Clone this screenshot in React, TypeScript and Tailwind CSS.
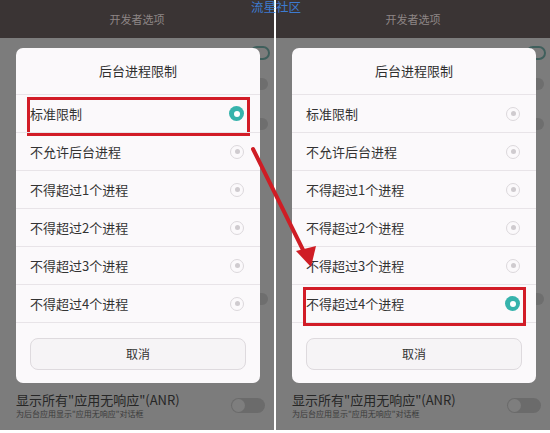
import React from "react";

const options = [
  "标准限制",
  "不允许后台进程",
  "不得超过1个进程",
  "不得超过2个进程",
  "不得超过3个进程",
  "不得超过4个进程",
];

const font = { fontFamily: '"Noto Sans CJK SC", "Noto Sans", sans-serif' };

function Radio({ on }: { on: boolean }) {
  if (on) {
    return (
      <div className="w-[15px] h-[15px] rounded-full bg-[#36b3ac] flex items-center justify-center">
        <div className="w-[6px] h-[6px] rounded-full bg-white" />
      </div>
    );
  }
  return (
    <div className="w-[14px] h-[14px] rounded-full border border-[#dcd8dc] flex items-center justify-center">
      <div className="w-[5px] h-[5px] rounded-full bg-[#cfcbcf]" />
    </div>
  );
}

function Toggle() {
  return (
    <div className="w-[34px] h-[15px] rounded-full bg-[#6b6b6b] flex items-center pl-[1px]">
      <div className="w-[13px] h-[13px] rounded-full bg-[#7e7e7e]" />
    </div>
  );
}

function Panel({ selected }: { selected: number }) {
  return (
    <div className="w-[274px] h-[433px] flex flex-col" style={font}>
      <div className="h-[38px] bg-[#3a3434] flex items-center justify-center text-[11px] text-[#8e8686]">
        开发者选项
      </div>
      <div className="relative flex-1 bg-[#7c7c7c] flex flex-col">
        <div className="absolute right-[4px] top-[8px] w-[20px] h-[14px] rounded-full border-2 border-[#3f5f5c]" />
        <div className="absolute right-[6px] top-[40px] w-[16px] h-[12px] rounded-full bg-[#6e6e6e]" />
        <div className="absolute right-[6px] top-[80px] w-[16px] h-[12px] rounded-full bg-[#6e6e6e]" />
        <div className="absolute right-[6px] top-[255px] w-[16px] h-[12px] rounded-full bg-[#6e6e6e]" />
        <div className="relative ml-[16px] mt-[10px] w-[244px] h-[335px] rounded-[7px] bg-[#fbf9fb] flex flex-col">
          <div className="h-[46px] flex items-center justify-center text-[13px] text-[#2e2e2e]">
            后台进程限制
          </div>
          {options.map((o, i) => (
            <div
              key={o}
              className="relative h-[38px] border-t border-[#e8e4e8] flex items-center justify-between pl-[14px] pr-[16px] text-[13px] text-[#333]"
            >
              <span>{o}</span>
              <Radio on={i === selected} />
              {i === selected && (
                <div className="absolute left-[11px] right-[10px] top-[2px] bottom-[-4px] border-[3px] border-[#d21c27]" />
              )}
            </div>
          ))}
          <div className="border-t border-[#e8e4e8] px-[14px] pt-[15px]">
            <div className="h-[32px] rounded-[8px] border border-[#dedade] bg-[#f6f4f6] flex items-center justify-center text-[12px] text-[#333]">
              取消
            </div>
          </div>
        </div>
        <div className="flex items-center justify-between pl-[16px] pr-[9px] mt-[8px]">
          <div className="flex flex-col">
            <div className="text-[13px] leading-[17px] text-[#262626]">显示所有"应用无响应"(ANR)</div>
            <div className="text-[8px] leading-[12px] text-[#3a3a3a]">为后台应用显示"应用无响应"对话框</div>
          </div>
          <Toggle />
        </div>
        <div className="mt-auto h-[3px] bg-white" />
      </div>
    </div>
  );
}

export default function App() {
  return (
    <div className="relative w-[550px] h-[433px] bg-white flex overflow-hidden">
      <Panel selected={0} />
      <div className="w-[2px] bg-white" />
      <Panel selected={5} />
      <svg className="absolute left-0 top-0" width="550" height="433">
        <line x1="253" y1="149" x2="306" y2="256" stroke="#cf1d25" strokeWidth="4" strokeLinecap="round" />
        <polygon points="311,267 296,251 316,246" fill="#cf1d25" />
      </svg>
      <div
        className="absolute left-[251px] top-0 text-[12.5px] leading-[13px] text-[#3d7bd0]"
        style={font}
      >
        流星社区
      </div>
    </div>
  );
}
